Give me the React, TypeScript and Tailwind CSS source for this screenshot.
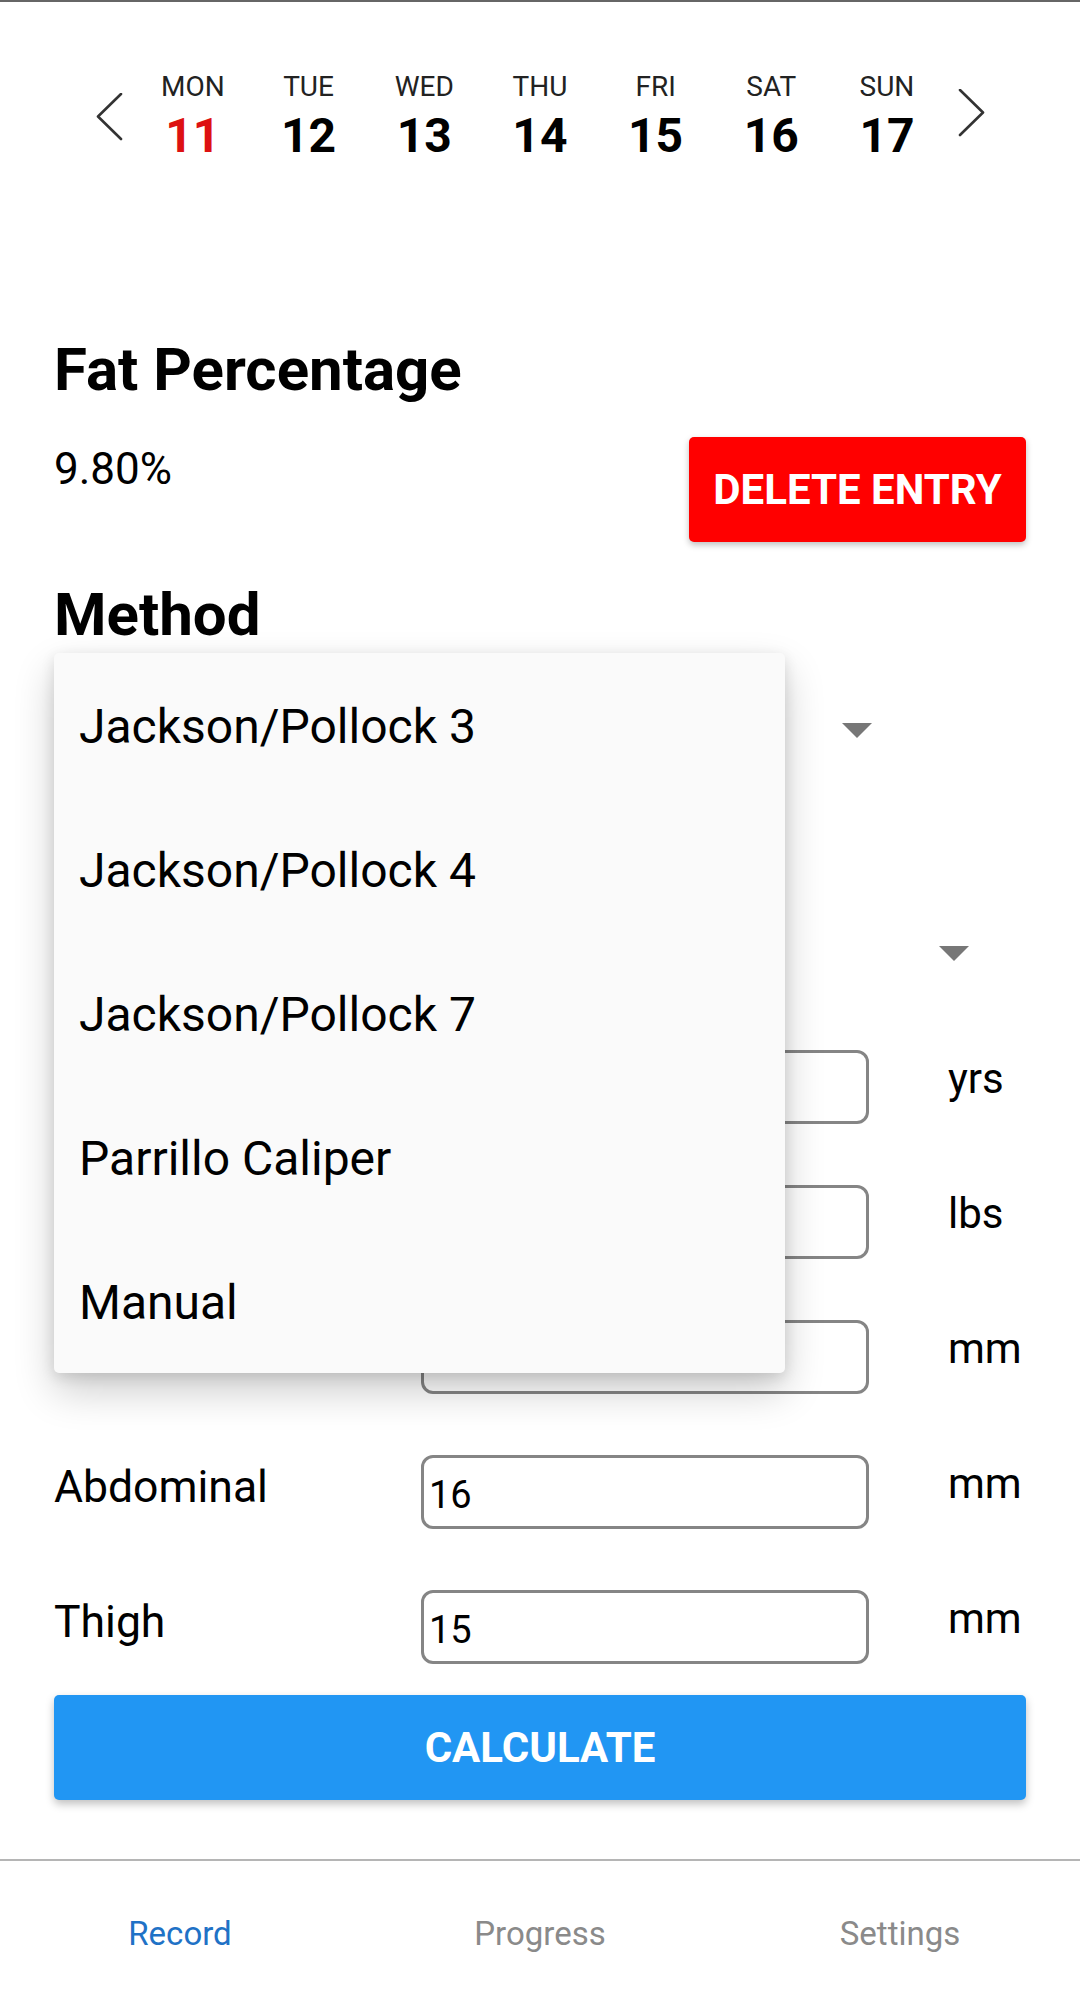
import React from "react";

const days = [
  { name: "MON", num: 11, today: true },
  { name: "TUE", num: 12 },
  { name: "WED", num: 13 },
  { name: "THU", num: 14 },
  { name: "FRI", num: 15 },
  { name: "SAT", num: 16 },
  { name: "SUN", num: 17 },
];

const methods = [
  "Jackson/Pollock 3",
  "Jackson/Pollock 4",
  "Jackson/Pollock 7",
  "Parrillo Caliper",
  "Manual",
];

const fields = [
  { label: "Age", value: "25", unit: "yrs" },
  { label: "Weight", value: "180", unit: "lbs" },
  { label: "Chest", value: "9", unit: "mm" },
  { label: "Abdominal", value: "16", unit: "mm" },
  { label: "Thigh", value: "15", unit: "mm" },
];

function Chevron({ dir }: { dir: "left" | "right" }) {
  return (
    <svg width="28" height="48" viewBox="0 0 28 48" className="shrink-0">
      <polyline
        points={dir === "left" ? "25,1 2,23.5 25,46" : "3,1 26,23.5 3,46"}
        fill="none"
        stroke="#333"
        strokeWidth="2.6"
        strokeLinecap="round"
        strokeLinejoin="round"
      />
    </svg>
  );
}

function Caret() {
  return (
    <svg width="30" height="15" viewBox="0 0 30 15" className="shrink-0">
      <polygon points="0,0 30,0 15,15" fill="#777" />
    </svg>
  );
}

export default function App() {
  return (
    <div
      className="relative flex h-[2007px] w-full flex-col overflow-hidden bg-white text-black"
      style={{ fontFamily: "Roboto, 'Liberation Sans', sans-serif" }}
    >
      <div className="h-[2px] bg-[#666]" />

      {/* week strip */}
      <div className="flex items-center pl-[96px] pt-[68px]">
        <Chevron dir="left" />
        <div className="ml-[11px] flex">
          {days.map((d) => (
            <div key={d.name} className="flex w-[115.7px] flex-col items-center">
              <span className="text-[28px] leading-[34px] text-[#222]">{d.name}</span>
              <span
                className={
                  "mt-[4px] text-[48px] font-bold leading-[56px] " +
                  (d.today ? "text-[#dd1111]" : "text-black")
                }
              >
                {d.num}
              </span>
            </div>
          ))}
        </div>
        <div className="ml-[12px] mt-[-8px]">
          <Chevron dir="right" />
        </div>
      </div>

      <div className="flex flex-1 flex-col px-[54px]">
        <h1 className="mt-[171px] text-[60px] font-bold leading-[70px]">Fat Percentage</h1>

        <div className="mt-[32px] flex items-start justify-between">
          <span className="mt-[6px] text-[44px] leading-[52px]">9.80%</span>
          <button className="flex h-[105px] w-[337px] items-center justify-center rounded-[5px] bg-[#ff0000] text-[42px] font-bold text-white shadow-[0_3px_6px_rgba(0,0,0,0.25)]">
            DELETE ENTRY
          </button>
        </div>

        <h2 className="mt-[38px] text-[60px] font-bold leading-[70px]">Method</h2>

        {/* spinners (covered by the open menu) */}
        <div className="flex h-[160px] w-[830px] items-center justify-end">
          <div className="mr-[12px]">
            <Caret />
          </div>
        </div>
        <div className="mt-[63px] flex h-[160px] w-[927px] items-center justify-end">
          <div className="mr-[12px]">
            <Caret />
          </div>
        </div>

        <div className="mt-[17px] flex flex-col gap-[61px]">
          {fields.map((f) => (
            <div key={f.label} className="flex h-[74px] items-start">
              <span className="mt-[6px] w-[367px] text-[44.5px] leading-[52px]">{f.label}</span>
              <input
                readOnly
                value={f.value}
                className="h-[74px] w-[448px] rounded-[12px] border-[3px] border-[#858585] bg-white px-[5px] pt-[6px] text-[38px] text-black outline-none"
              />
              <span className="ml-[79px] mt-[3px] text-[42px] leading-[52px]">{f.unit}</span>
            </div>
          ))}
        </div>

        <button className="mt-[31px] flex h-[105px] w-full items-center justify-center rounded-[5px] bg-[#2196f3] text-[42px] font-bold text-white shadow-[0_4px_8px_rgba(0,0,0,0.25)]">
          CALCULATE
        </button>
      </div>

      {/* bottom tabs */}
      <nav className="flex h-[148px] border-t-[2px] border-[#b5b5b5]">
        <div className="flex flex-1 items-center justify-center text-[33px] text-[#1f72c6]">Record</div>
        <div className="flex flex-1 items-center justify-center text-[33px] text-[#8a8a8a]">Progress</div>
        <div className="flex flex-1 items-center justify-center text-[33px] text-[#8a8a8a]">Settings</div>
      </nav>

      {/* open method menu */}
      <div className="absolute left-[54px] top-[653px] flex w-[731px] flex-col rounded-[5px] bg-[#fafafa] shadow-[0_18px_40px_rgba(0,0,0,0.2),0_4px_14px_rgba(0,0,0,0.12)]">
        {methods.map((m) => (
          <div key={m} className="flex h-[144px] items-center pl-[25px] pt-[3px] text-[48px] text-black">
            {m}
          </div>
        ))}
      </div>
    </div>
  );
}
